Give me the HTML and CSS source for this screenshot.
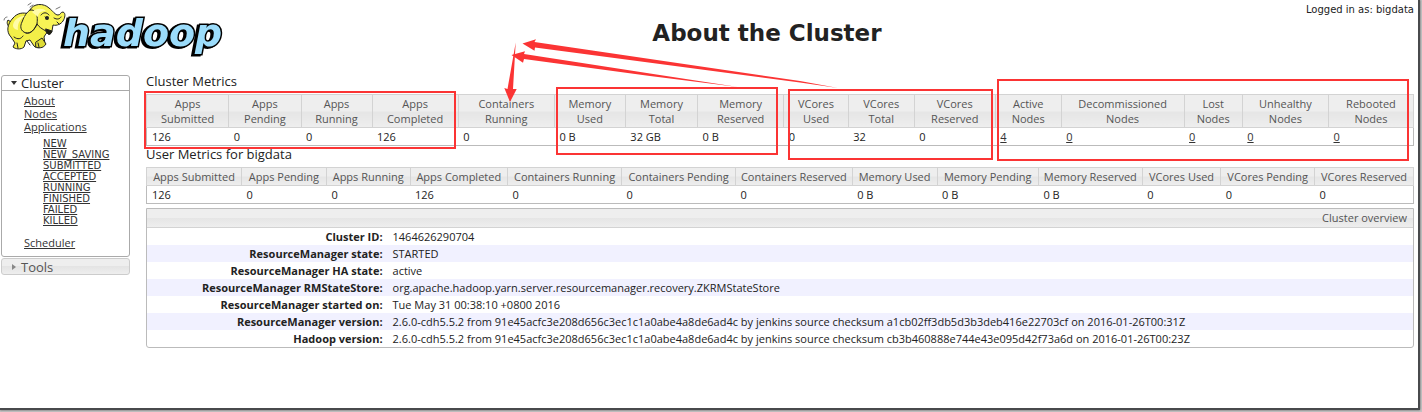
FILE: index.html
```
<!DOCTYPE html>
<html lang="en">
    <head>
        <meta charset="UTF-8"/>
        <title>About the Cluster</title>
        <link rel="stylesheet" href="styles.css">
    </head>

    <body>
        <div class="page">
            <header class="header">
                <svg class="logo" width="228" height="60" viewBox="0 0 228 60" role="img" aria-label="hadoop">
                    <g stroke="#222" stroke-width="1" stroke-linejoin="round" stroke-linecap="round">
                        <path d="M11 28C8 27 6 23 8 20L11 22C10 24 11 26 13 27" fill="#e8e642"/>
                        <path d="M13 18C17 13 23 12 29 14C38 15 48 20 49 27C49 32 45 34 44 37L45 44C43 48 36 49 34 46L30 40L26 41L24 47C21 50 15 49 13 47L15 43L11 37C6 32 7 24 13 18Z" fill="#f3ef48"/>
                        <path d="M36 42L42 38L46 44C43 49 38 48 36 47Z" fill="#dedb35"/>
                        <path d="M30 10C33 3 44 3 49 8C53 11 55 15 58 15C61 15 60 12 63 12C66 13 65 18 63 21C61 24 57 26 53 25L52 31C51 35 47 35 46 31C42 29 39 27 37 24C35 29 31 34 26 33C20 31 20 26 22 22C24 16 27 12 30 10Z" fill="#f8f455"/>
                        <path d="M30 10C37 9 38 16 37 24M37 24C34 30 31 34 26 33" fill="none"/>
                        <path d="M45 17L47 19M41 15C43 12 47 12 49 15M54 18C57 20 60 19 61 17M57 22L59 24" fill="none"/>
                        <path d="M46 29L52 31C51 35 48 36 46 31Z" fill="#221"/>
                        <path d="M14 37C18 40 21 39 23 36M27 41L30 45M17 43L18 48M38 43L39 47" fill="none"/>
                        <path d="M28 5L31 3M30 7L33 5M4 20C4 18 6 17 7 17M56 9L60 7" fill="none" stroke="#777"/>
                    </g>
                    <ellipse cx="47" cy="18" rx="2" ry="2" fill="#222"/>
                    <path d="M14 22C17 17 22 16 25 16C20 19 17 24 18 30C13 29 12 26 14 22ZM32 12C36 8 43 8 46 11C41 11 38 13 38 17Z" fill="#fffca8"/>
                    <text class="logo-text" x="63" y="46">hadoop</text>
                </svg>
                <h1>About the Cluster</h1>
                <div class="login">Logged in as: bigdata</div>
            </header>

            <div class="content">
                <nav class="sidebar">
                    <section class="menu">
                        <h3><svg width="6" height="4" viewBox="0 0 6 4"><path d="M0 0H6L3 4Z" fill="#333"/></svg>Cluster</h3>
                        <ul>
                            <li><a href="#about">About</a></li>
                            <li><a href="#nodes">Nodes</a></li>
                            <li><a href="#apps">Applications</a>
                                <ul class="states">
                                    <li><a href="#new">NEW</a></li>
                                    <li><a href="#new_saving">NEW_SAVING</a></li>
                                    <li><a href="#submitted">SUBMITTED</a></li>
                                    <li><a href="#accepted">ACCEPTED</a></li>
                                    <li><a href="#running">RUNNING</a></li>
                                    <li><a href="#finished">FINISHED</a></li>
                                    <li><a href="#failed">FAILED</a></li>
                                    <li><a href="#killed">KILLED</a></li>
                                </ul>
                            </li>
                            <li><a href="#scheduler">Scheduler</a></li>
                        </ul>
                    </section>
                    <section class="menu closed">
                        <h3><svg width="6" height="6" viewBox="0 0 6 6"><path d="M1 0L5 3L1 6Z" fill="#888"/></svg>Tools</h3>
                    </section>
                </nav>

                <main class="main">
                    <h2>Cluster Metrics</h2>
                    <table class="metrics cluster-metrics">
                        <thead>
                            <tr>
                                <th>Apps<br>Submitted</th>
                                <th>Apps<br>Pending</th>
                                <th>Apps<br>Running</th>
                                <th>Apps<br>Completed</th>
                                <th>Containers<br>Running</th>
                                <th>Memory<br>Used</th>
                                <th>Memory<br>Total</th>
                                <th>Memory<br>Reserved</th>
                                <th>VCores<br>Used</th>
                                <th>VCores<br>Total</th>
                                <th>VCores<br>Reserved</th>
                                <th>Active<br>Nodes</th>
                                <th>Decommissioned<br>Nodes</th>
                                <th>Lost<br>Nodes</th>
                                <th>Unhealthy<br>Nodes</th>
                                <th>Rebooted<br>Nodes</th>
                            </tr>
                        </thead>
                        <tbody>
                            <tr>
                                <td>126</td>
                                <td>0</td>
                                <td>0</td>
                                <td>126</td>
                                <td>0</td>
                                <td>0 B</td>
                                <td>32 GB</td>
                                <td>0 B</td>
                                <td>0</td>
                                <td>32</td>
                                <td>0</td>
                                <td><a href="#active">4</a></td>
                                <td><a href="#decommissioned">0</a></td>
                                <td><a href="#lost">0</a></td>
                                <td><a href="#unhealthy">0</a></td>
                                <td><a href="#rebooted">0</a></td>
                            </tr>
                        </tbody>
                    </table>

                    <h2>User Metrics for bigdata</h2>
                    <table class="metrics user-metrics">
                        <thead>
                            <tr>
                                <th>Apps Submitted</th>
                                <th>Apps Pending</th>
                                <th>Apps Running</th>
                                <th>Apps Completed</th>
                                <th>Containers Running</th>
                                <th>Containers Pending</th>
                                <th>Containers Reserved</th>
                                <th>Memory Used</th>
                                <th>Memory Pending</th>
                                <th>Memory Reserved</th>
                                <th>VCores Used</th>
                                <th>VCores Pending</th>
                                <th>VCores Reserved</th>
                            </tr>
                        </thead>
                        <tbody>
                            <tr>
                                <td>126</td>
                                <td>0</td>
                                <td>0</td>
                                <td>126</td>
                                <td>0</td>
                                <td>0</td>
                                <td>0</td>
                                <td>0 B</td>
                                <td>0 B</td>
                                <td>0 B</td>
                                <td>0</td>
                                <td>0</td>
                                <td>0</td>
                            </tr>
                        </tbody>
                    </table>

                    <section class="overview">
                        <h4>Cluster overview</h4>
                        <table class="info">
                            <tbody>
                                <tr><th>Cluster ID:</th><td>1464626290704</td></tr>
                                <tr><th>ResourceManager state:</th><td>STARTED</td></tr>
                                <tr><th>ResourceManager HA state:</th><td>active</td></tr>
                                <tr><th>ResourceManager RMStateStore:</th><td>org.apache.hadoop.yarn.server.resourcemanager.recovery.ZKRMStateStore</td></tr>
                                <tr><th>ResourceManager started on:</th><td>Tue May 31 00:38:10 +0800 2016</td></tr>
                                <tr><th>ResourceManager version:</th><td>2.6.0-cdh5.5.2 from 91e45acfc3e208d656c3ec1c1a0abe4a8de6ad4c by jenkins source checksum a1cb02ff3db5d3b3deb416e22703cf on 2016-01-26T00:31Z</td></tr>
                                <tr><th>Hadoop version:</th><td>2.6.0-cdh5.5.2 from 91e45acfc3e208d656c3ec1c1a0abe4a8de6ad4c by jenkins source checksum cb3b460888e744e43e095d42f73a6d on 2016-01-26T00:23Z</td></tr>
                            </tbody>
                        </table>
                    </section>
                </main>
            </div>
        </div>

        <!-- red boxes and arrows over the metrics -->
        <svg class="marks" viewBox="0 0 1422 412" preserveAspectRatio="xMinYMin" aria-hidden="true">
            <g fill="none" stroke="#fb3434" stroke-width="2">
                <rect x="145" y="92" width="310" height="56"/>
                <rect x="557" y="88" width="220" height="66"/>
                <rect x="789" y="90" width="203" height="69"/>
                <rect x="998" y="80" width="410" height="80"/>
            </g>
            <g fill="#fb3434">
                <path d="M522.5 43.5L536 39.3L534.5 42L800 81L838 88L800 82.5L535 47.5L534.5 50.7Z"/>
                <path d="M511.5 55L525 51.3L524 54L650 73.5L738 87L650 76L524 59L523 62.7Z"/>
                <path d="M510 102L504.3 88L507.5 89L515.7 42.5L513 89L516.7 89Z"/>
            </g>
        </svg>
    </body>
</html>
```
FILE: styles.css
```
*{
    box-sizing:border-box;
}
body,h1,h2,h3,h4,ul{
    margin:0;
    padding:0;
}
ul{
    list-style:none;
}
body{
    position:relative;
    padding:0 2px 2px 0;
    background:#c4c4c4;
    color:#222;
    font-family:"Open Sans","Noto Sans",sans-serif;
    font-size:11px;
}
a{
    color:#333;
}
.page{
    min-height:calc(100vh - 2px);
    background:#fff;
    border-right:2px #484a4c solid;
    border-bottom:2px #484a4c solid;
    box-shadow:0 0 2px #555;
}

/* header */
.header{
    display:flex;
    height:73px;
}
.logo{
    flex:none;
}
.logo-text{
    font-family:"DejaVu Sans",sans-serif;
    font-size:38px;
    font-weight:bold;
    font-style:italic;
    fill:#9bdcfb;
    stroke:#000;
    stroke-width:3px;
    paint-order:stroke;
    filter:drop-shadow(-2px 1px 0 #000);
}
h1{
    flex:1;
    font-family:"DejaVu Sans",sans-serif;
    font-size:23px;
    line-height:66px;
    text-align:center;
}
.login{
    padding:4px 4px 0 0;
    font-family:"DejaVu Sans",sans-serif;
    font-size:10px;
    line-height:12px;
}

.content{
    display:flex;
    gap:16px;
    padding:0 4px 0 1px;
}

/* left menu */
.sidebar{
    flex:none;
    width:129px;
    padding-top:2px;
}
.menu{
    margin-bottom:1px;
    padding-bottom:7px;
    border:1px #aaa solid;
    border-radius:3px;
}
.menu h3{
    display:flex;
    align-items:center;
    gap:4px;
    height:15px;
    padding-left:9px;
    border-bottom:1px #aaa solid;
    font-size:13px;
    font-weight:normal;
}
.menu ul{
    padding:3px 0 0 22px;
    line-height:13px;
}
.menu .states{
    padding:5px 0 10px 19px;
    font-family:"DejaVu Sans",sans-serif;
    font-size:10px;
    line-height:11px;
}
.closed{
    padding:0;
    border-color:#ccc;
    background:linear-gradient(#eee 50%,#e4e4e4 50%,#eee);
}
.closed h3{
    border:0;
    color:#555;
}

/* tables */
.main{
    flex:1;
    min-width:0;
}
h2{
    font-size:13px;
    font-weight:normal;
    line-height:16px;
    padding-bottom:5px;
}
table{
    width:100%;
    table-layout:fixed;
    border-collapse:collapse;
}
.metrics{
    border:1px #bbb solid;
    white-space:nowrap;
}
.metrics th{
    padding:1px 0;
    border:1px #d3d3d3 solid;
    background:linear-gradient(#eee 50%,#e5e5e5 50%,#eee);
    color:#555;
    font-weight:normal;
    line-height:15px;
}
.metrics td{
    padding:1px 5px;
    line-height:15px;
}
.user-metrics{
    margin-bottom:4px;
}
.cluster-metrics th:nth-child(1){ width:6.5%; }
.cluster-metrics th:nth-child(2){ width:5.7%; }
.cluster-metrics th:nth-child(3){ width:5.6%; }
.cluster-metrics th:nth-child(4){ width:6.8%; }
.cluster-metrics th:nth-child(5){ width:7.6%; }
.cluster-metrics th:nth-child(6){ width:5.6%; }
.cluster-metrics th:nth-child(7){ width:5.7%; }
.cluster-metrics th:nth-child(8){ width:6.8%; }
.cluster-metrics th:nth-child(9){ width:5.1%; }
.cluster-metrics th:nth-child(10){ width:5.2%; }
.cluster-metrics th:nth-child(11){ width:6.4%; }
.cluster-metrics th:nth-child(12){ width:5.2%; }
.cluster-metrics th:nth-child(13){ width:9.7%; }
.cluster-metrics th:nth-child(14){ width:4.6%; }
.cluster-metrics th:nth-child(15){ width:6.8%; }

.user-metrics th:nth-child(1){ width:7.5%; }
.user-metrics th:nth-child(2){ width:6.7%; }
.user-metrics th:nth-child(3){ width:6.6%; }
.user-metrics th:nth-child(4){ width:7.7%; }
.user-metrics th:nth-child(5){ width:9%; }
.user-metrics th:nth-child(6){ width:9%; }
.user-metrics th:nth-child(7){ width:9.2%; }
.user-metrics th:nth-child(8){ width:6.7%; }
.user-metrics th:nth-child(9){ width:8%; }
.user-metrics th:nth-child(10){ width:8.2%; }
.user-metrics th:nth-child(11){ width:6.2%; }
.user-metrics th:nth-child(12){ width:7.4%; }

.overview{
    border:1px #bbb solid;
    border-radius:0 0 3px 3px;
}
.overview h4{
    padding-right:6px;
    border-bottom:1px #d3d3d3 solid;
    background:linear-gradient(#eee 50%,#e5e5e5 50%,#eee);
    color:#555;
    font-weight:normal;
    line-height:18px;
    text-align:right;
}
.info th,.info td{
    padding:0 5px;
    line-height:17px;
}
.info th{
    width:19%;
    text-align:right;
}
.info tr:nth-child(even){
    background:#f1f1ff;
}

.marks{
    position:absolute;
    top:0;
    left:0;
    width:100%;
    pointer-events:none;
}
```
